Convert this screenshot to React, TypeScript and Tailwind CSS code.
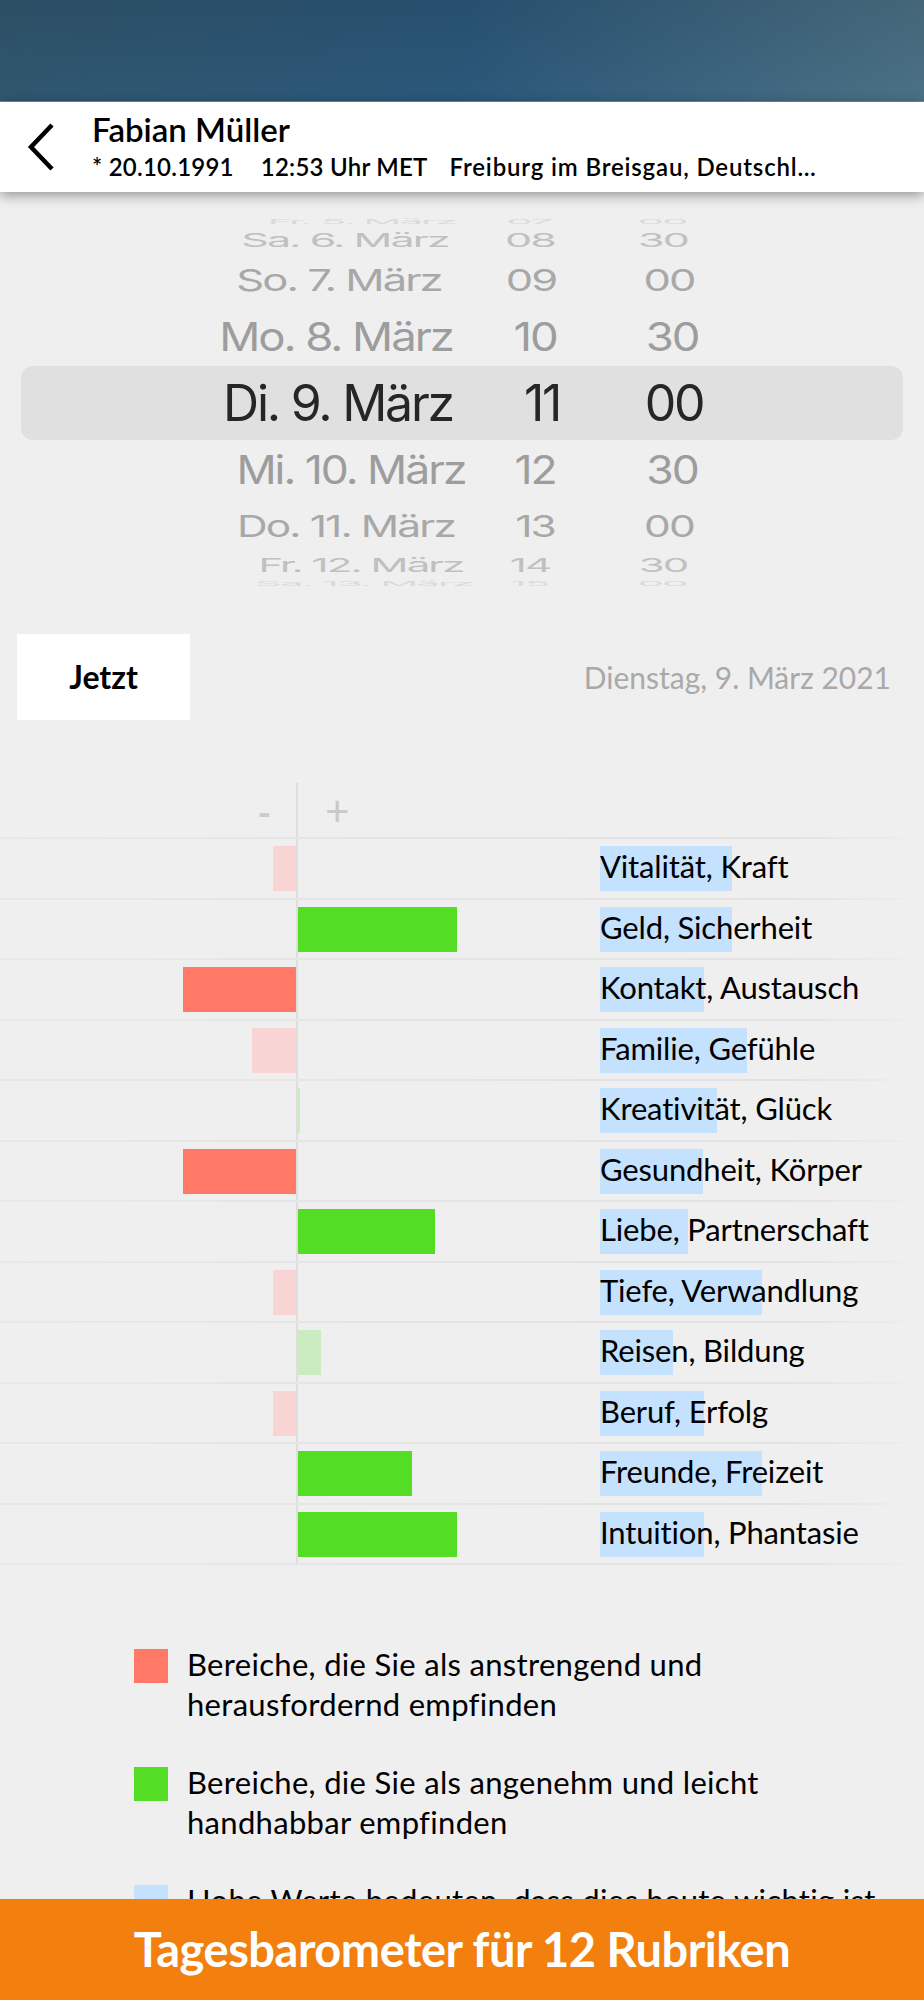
import type { CSSProperties } from 'react';

// ── Tagesbarometer screen ─────────────────────────────────────────────────────

const SANS = "font-['Lato','Open_Sans',sans-serif]";
const WHEEL = "font-['Inter','Roboto',sans-serif]";

type WheelRowProps = {
  date: string;
  hour: string;
  min: string;
  rowCls: string;
  cellCls: string;
  dateCls?: string;
  hourCls?: string;
  minCls?: string;
};

function WheelRow({ date, hour, min, rowCls, cellCls, dateCls = '', hourCls = '', minCls = '' }: WheelRowProps) {
  return (
    <div className={`flex items-center overflow-visible ${rowCls}`}>
      <span className={`w-[280px] shrink-0 text-center whitespace-nowrap ${cellCls} ${dateCls}`}>{date}</span>
      <span className={`w-[90px] ml-[17px] shrink-0 text-center ${cellCls} ${hourCls}`}>{hour}</span>
      <span className={`w-[90px] ml-[44px] shrink-0 text-center ${cellCls} ${minCls}`}>{min}</span>
    </div>
  );
}

function Wheel() {
  return (
    <div className={`pt-[24px] flex flex-col text-[50px] leading-none tracking-[-0.045em] ${WHEEL}`}>
      <WheelRow date="Fr. 5. März" hour="07" min="00" rowCls="h-[12px] pl-[198px]"
        cellCls="text-[#dadada] scale-y-[0.12] scale-x-[0.84]"
        dateCls="translate-x-[24px]" hourCls="-translate-x-[11px]" minCls="-translate-x-[12px]" />
      <WheelRow date="Sa. 6. März" hour="08" min="30" rowCls="h-[24px] pl-[198px]"
        cellCls="text-[#c0c0c0] scale-y-[0.37] scale-x-[0.86]"
        dateCls="translate-x-[7px]" hourCls="-translate-x-[10px]" minCls="-translate-x-[11px]" />
      <WheelRow date="So. 7. März" hour="09" min="00" rowCls="h-[56px] pl-[198px]"
        cellCls="text-[#a8a8a8] scale-y-[0.6] scale-x-[0.87]"
        dateCls="translate-x-[1px]" hourCls="-translate-x-[9px]" minCls="-translate-x-[5px]" />
      <WheelRow date="Mo. 8. März" hour="10" min="30" rowCls="h-[58px] pl-[198px]"
        cellCls="text-[#9d9d9d] scale-y-[0.8] scale-x-[0.91]"
        dateCls="-translate-x-[2px]" hourCls="-translate-x-[5px]" minCls="-translate-x-[2px]" />
      <WheelRow date="Di. 9. März" hour="11" min="00"
        rowCls="h-[74px] mx-[21px] pl-[177px] rounded-[12px] bg-[#e0e0e0]"
        cellCls="text-[#262626]" hourCls="translate-x-[2px]" />
      <WheelRow date="Mi. 10. März" hour="12" min="30" rowCls="h-[60px] pl-[198px]"
        cellCls="text-[#9d9d9d] scale-y-[0.78] scale-x-[0.89]"
        dateCls="translate-x-[13px]" hourCls="-translate-x-[5px]" minCls="-translate-x-[2px]" />
      <WheelRow date="Do. 11. März" hour="13" min="00" rowCls="h-[52px] pl-[198px]"
        cellCls="text-[#a8a8a8] scale-y-[0.6] scale-x-[0.85]"
        dateCls="translate-x-[8px]" hourCls="-translate-x-[5px]" minCls="-translate-x-[5px]" />
      <WheelRow date="Fr. 12. März" hour="14" min="30" rowCls="h-[26px] pl-[198px]"
        cellCls="text-[#c0c0c0] scale-y-[0.38] scale-x-[0.84]"
        dateCls="translate-x-[23px]" hourCls="-translate-x-[10px]" minCls="-translate-x-[11px]" />
      <WheelRow date="Sa. 13. März" hour="15" min="00" rowCls="h-[12px] pl-[198px]"
        cellCls="text-[#dadada] scale-y-[0.12] scale-x-[0.84]"
        dateCls="translate-x-[26px]" hourCls="-translate-x-[11px]" minCls="-translate-x-[12px]" />
    </div>
  );
}

type Tone = 'strong' | 'light';

// value < 0 → burdening (red), value > 0 → easy (green); hl = width of the blue "high value" marker
const AREAS: { label: string; value: number; tone: Tone; hl: number }[] = [
  { label: 'Vitalität, Kraft', value: -23, tone: 'light', hl: 132 },
  { label: 'Geld, Sicherheit', value: 159, tone: 'strong', hl: 132 },
  { label: 'Kontakt, Austausch', value: -113, tone: 'strong', hl: 104 },
  { label: 'Familie, Gefühle', value: -44, tone: 'light', hl: 147 },
  { label: 'Kreativität, Glück', value: 2, tone: 'light', hl: 117 },
  { label: 'Gesundheit, Körper', value: -113, tone: 'strong', hl: 103 },
  { label: 'Liebe, Partnerschaft', value: 137, tone: 'strong', hl: 88 },
  { label: 'Tiefe, Verwandlung', value: -23, tone: 'light', hl: 162 },
  { label: 'Reisen, Bildung', value: 23, tone: 'light', hl: 73 },
  { label: 'Beruf, Erfolg', value: -23, tone: 'light', hl: 104 },
  { label: 'Freunde, Freizeit', value: 114, tone: 'strong', hl: 162 },
  { label: 'Intuition, Phantasie', value: 159, tone: 'strong', hl: 104 },
];

function barColor(value: number, tone: Tone) {
  if (value < 0) return tone === 'strong' ? 'bg-[#ff7966]' : 'bg-[#f9d4d4]';
  return tone === 'strong' ? 'bg-[#53dd25]' : 'bg-[#cbebc0]';
}

function Separator() {
  return <div className="h-[2px] bg-linear-to-r from-[#e8e8e8] via-[#e2e2e2] via-85% to-[#efefef]" />;
}

function BarRow({ label, value, tone, hl }: (typeof AREAS)[number]) {
  const width: CSSProperties = { width: Math.abs(value) };
  return (
    <div className="flex h-[58.5px]">
      <div className="w-[296px] flex justify-end pt-[7px] pb-[6.5px]">
        {value < 0 && <div className={`h-full ${barColor(value, tone)}`} style={width} />}
      </div>
      <div className="w-[2px] bg-[#dedede]" />
      <div className="w-[302px] flex pt-[7px] pb-[6.5px]">
        {value > 0 && <div className={`h-full ${barColor(value, tone)}`} style={width} />}
      </div>
      <div className="grid pt-[7px] pb-[6.5px]">
        <div className="col-start-1 row-start-1 h-[45px] bg-[#c4e1fd]" style={{ width: hl }} />
        <span className="col-start-1 row-start-1 relative text-[31px] leading-[45px] -translate-y-[2px] text-black whitespace-nowrap tracking-[-0.005em]">
          {label}
        </span>
      </div>
    </div>
  );
}

function Chart() {
  return (
    <div className="mt-[63px]">
      <div className="flex h-[54px] items-center">
        <div className="w-[296px] h-full flex items-center justify-end pr-[25px] pt-[4px] text-[36px] font-bold text-[#cacaca]">-</div>
        <div className="w-[2px] h-full bg-[#dedede]" />
        <div className="h-full flex items-center pl-[27px] text-[42px] text-[#c9c9c9]">+</div>
      </div>
      {AREAS.map((a) => (
        <div key={a.label}>
          <Separator />
          <BarRow {...a} />
        </div>
      ))}
      <Separator />
    </div>
  );
}

function LegendItem({ swatch, lines }: { swatch: string; lines: string[] }) {
  return (
    <div className="flex pl-[134px]">
      <div className={`w-[34px] h-[34px] mt-[5px] shrink-0 ${swatch}`} />
      <div className="ml-[19px] text-[31px] leading-[40px] tracking-[0.01em] text-black whitespace-nowrap">
        {lines.map((l) => (
          <div key={l}>{l}</div>
        ))}
      </div>
    </div>
  );
}

export default function App() {
  return (
    <div className={`w-[924px] h-[2000px] flex flex-col overflow-hidden bg-[#efefef] ${SANS}`}>
      {/* status area */}
      <div className="h-[102px] shrink-0 bg-linear-to-r from-[#30576f] via-[#2b587a] via-50% to-[#4b7185] border-b border-[#6b8da1]">
        <div className="h-full bg-linear-to-b from-black/10 to-transparent" />
      </div>

      {/* person header */}
      <header className="h-[90px] shrink-0 bg-white flex items-start relative z-10 shadow-[0_3px_12px_rgba(0,0,0,0.4)]">
        <svg className="w-[30px] h-[50px] ml-[26px] mt-[20px] shrink-0" viewBox="0 0 30 50" fill="none">
          <path d="M26 3 L5 25 L26 47" stroke="#000" strokeWidth={4.5} strokeLinejoin="miter" />
        </svg>
        <div className="ml-[36px] pt-[10px] flex flex-col">
          <span className="text-[33px] leading-[34px] font-semibold text-black">Fabian Müller</span>
          <span className="mt-[8px] text-[24px] leading-[26px] font-semibold text-black whitespace-nowrap tracking-[0.01em]">
            * 20.10.1991<span className="ml-[27px]">12:53 Uhr MET</span>
            <span className="ml-[22px] tracking-[0.035em]">Freiburg im Breisgau, Deutschl…</span>
          </span>
        </div>
      </header>

      <main className="flex-1 min-h-0 overflow-hidden">
        <Wheel />

        <div className="mt-[44px] flex items-center justify-between pl-[17px] pr-[33px]">
          <button className="w-[173px] h-[86px] bg-white flex items-center justify-center text-[32px] font-bold text-black">
            Jetzt
          </button>
          <span className="text-[30px] text-[#a9a9a9]">Dienstag, 9. März 2021</span>
        </div>

        <Chart />

        <div className="mt-[79px] flex flex-col gap-[38px]">
          <LegendItem swatch="bg-[#ff7966]" lines={['Bereiche, die Sie als anstrengend und', 'herausfordernd empfinden']} />
          <LegendItem swatch="bg-[#53dd25]" lines={['Bereiche, die Sie als angenehm und leicht', 'handhabbar empfinden']} />
          <LegendItem swatch="bg-[#c4e1fd]" lines={['Hohe Werte bedeuten, dass dies heute wichtig ist']} />
        </div>
      </main>

      <footer className="h-[101px] shrink-0 bg-[#f27f0e] flex items-center justify-center">
        <span className="text-[47px] font-bold text-white tracking-[-0.01em]">Tagesbarometer für 12 Rubriken</span>
      </footer>
    </div>
  );
}
